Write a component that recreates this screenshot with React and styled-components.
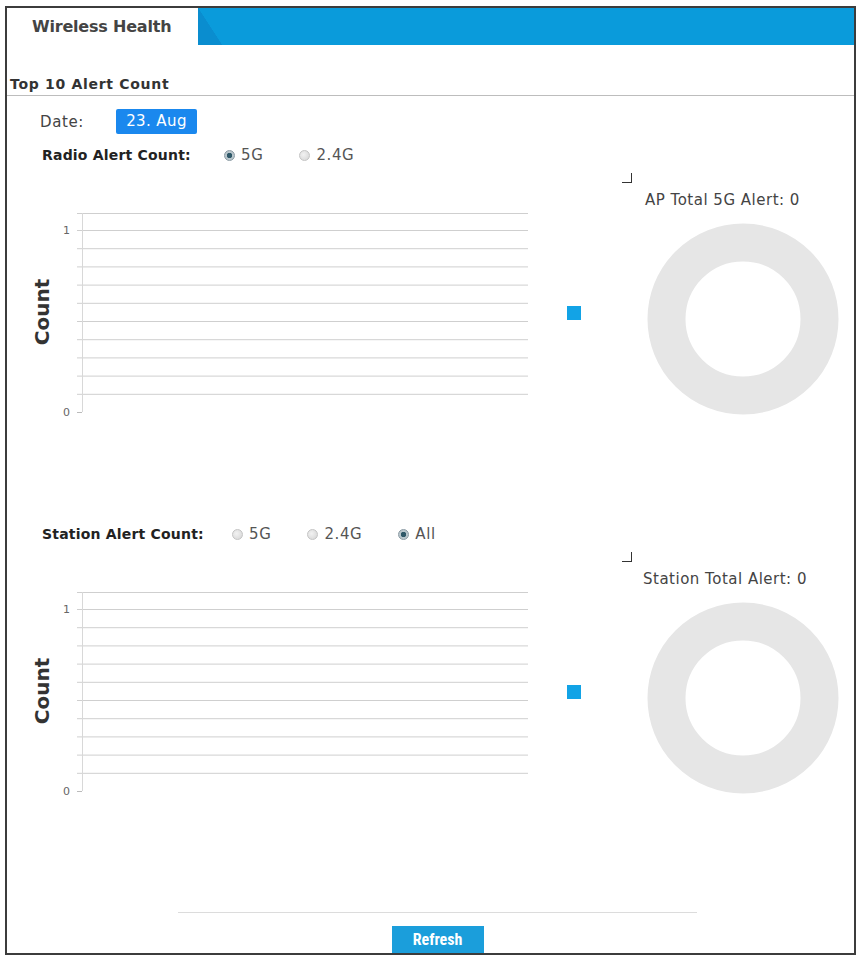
import styled, { createGlobalStyle } from 'styled-components';

const GlobalStyle = createGlobalStyle`
  html, body {
    margin: 0;
    padding: 0;
    background: #fff;
  }
  body {
    font-family: 'DejaVu Sans', 'Noto Sans', sans-serif;
    color: #333;
  }
`;

const Frame = styled.div`
  box-sizing: border-box;
  width: 851px;
  height: 949px;
  margin: 6px 0 0 5px;
  border: 2px solid #3c3c3c;
  display: flex;
  flex-direction: column;
`;

const Header = styled.div`
  display: flex;
  height: 37px;
`;

const Tab = styled.div`
  width: 191px;
  padding-left: 25px;
  box-sizing: border-box;
  display: flex;
  align-items: center;
  font-size: 16px;
  font-weight: 600;
  color: #444;
  letter-spacing: -0.2px;
`;

const Bar = styled.div`
  flex: 1;
  position: relative;
  background: #0a9bdb;

  &::before {
    content: '';
    position: absolute;
    left: 0;
    top: 0;
    width: 24px;
    height: 100%;
    background: linear-gradient(to top right, #0a8dcf 50%, transparent 51%);
  }
`;

const SectionTitle = styled.div`
  margin-top: 30px;
  padding: 0 0 2px 3px;
  height: 18px;
  line-height: 18px;
  font-size: 14px;
  font-weight: 600;
  letter-spacing: 0.7px;
  color: #333;
  border-bottom: 1px solid #bdbdbd;
`;

const DateRow = styled.div`
  display: flex;
  align-items: center;
  margin-top: 13px;
  padding-left: 33px;
  height: 25px;
`;

const DateLabel = styled.span`
  width: 76px;
  font-size: 15px;
  letter-spacing: 0.6px;
  color: #444;
`;

const DateBadge = styled.span`
  width: 81px;
  height: 25px;
  line-height: 25px;
  text-align: center;
  background: #1a88ee;
  border-radius: 2px;
  color: #fff;
  font-size: 15px;
  letter-spacing: 0.4px;
`;

const ControlRow = styled.div`
  display: flex;
  align-items: center;
  height: 20px;
  margin-top: ${(p) => p.$top}px;
  padding-left: 35px;
`;

const ControlLabel = styled.span`
  width: ${(p) => p.$width}px;
  font-size: 14px;
  font-weight: 700;
  letter-spacing: 0.2px;
  color: #222;
`;

const RadioOption = styled.label`
  display: flex;
  align-items: center;
  gap: 6px;
  margin-right: 36px;
  font-size: 15px;
  letter-spacing: 0.6px;
  color: #555;
`;

const RadioDot = styled.span`
  box-sizing: border-box;
  width: 11px;
  height: 11px;
  border-radius: 50%;
  border: 1px solid ${(p) => (p.$checked ? '#8a9aa3' : '#c4c4c4')};
  background: ${(p) =>
    p.$checked
      ? 'radial-gradient(circle, #2f5868 0 2.5px, #b9c6cc 3px)'
      : 'radial-gradient(circle at 40% 40%, #f2f2f2, #d4d4d4)'};
`;

const ChartRow = styled.div`
  display: grid;
  grid-template-columns: 535px 60px 1fr;
  height: 359px;
`;

const Legend = styled.div`
  padding: 141px 0 0 25px;
`;

const LegendSwatch = styled.span`
  display: block;
  width: 14px;
  height: 14px;
  background: #12a3e6;
`;

const DonutPanel = styled.div`
  display: flex;
  flex-direction: column;
  align-items: flex-start;
`;

const CornerMark = styled.span`
  width: 9px;
  height: 9px;
  margin: 8px 0 0 20px;
  border-right: 1.5px solid #333;
  border-bottom: 1.5px solid #333;
`;

const DonutTitle = styled.div`
  margin: 8px 0 0 ${(p) => p.$left}px;
  height: 18px;
  line-height: 18px;
  font-size: 15px;
  letter-spacing: 0.5px;
  color: #444;
`;

const DonutWrap = styled.div`
  margin: 14px 0 0 45px;
`;

const Footer = styled.div`
  display: flex;
  flex-direction: column;
  align-items: center;
  padding-left: 14px;
`;

const Separator = styled.div`
  width: 519px;
  margin-top: 9px;
  border-top: 1px solid #dcdcdc;
`;

const RefreshButton = styled.button`
  margin-top: 13px;
  width: 92px;
  height: 27px;
  border: none;
  background: #1b9edb;
  color: #fff;
  font-family: 'Liberation Sans Narrow', 'Roboto Condensed', Roboto, sans-serif;
  font-size: 16px;
  font-weight: 700;
  cursor: pointer;
`;

const gridTop = 65;
const gridBottom = 247;
const step = (gridBottom - gridTop) / 10;
const gridLines = [48, ...Array.from({ length: 10 }, (_, i) => gridTop + i * step)];

function CountChart() {
  return (
    <svg width="535" height="359">
      <text
        x="35"
        y="147"
        transform="rotate(-90 35 147)"
        textAnchor="middle"
        dominantBaseline="central"
        fontFamily="DejaVu Sans, sans-serif"
        fontWeight="700"
        fontSize="20"
        fill="#333"
      >
        Count
      </text>
      {gridLines.map((y) => (
        <line key={y} x1="70" x2="521" y1={y + 0.5} y2={y + 0.5} stroke="#cfcfcf" />
      ))}
      <line x1="75.5" x2="75.5" y1="48" y2="247" stroke="#d8d8d8" />
      <line x1="70" x2="75" y1="247.5" y2="247.5" stroke="#bbb" />
      <text x="63" y="65" textAnchor="end" dominantBaseline="central" fontSize="11" fill="#666" fontFamily="DejaVu Sans, sans-serif">
        1
      </text>
      <text x="63" y="247" textAnchor="end" dominantBaseline="central" fontSize="11" fill="#666" fontFamily="DejaVu Sans, sans-serif">
        0
      </text>
    </svg>
  );
}

function Donut() {
  return (
    <svg width="192" height="192" viewBox="0 0 192 192">
      <circle cx="96" cy="96" r="76.5" fill="none" stroke="#e6e6e6" strokeWidth="38" />
    </svg>
  );
}

function AlertSection({ label, labelWidth, options, title, titleLeft, top }) {
  return (
    <>
      <ControlRow $top={top}>
        <ControlLabel $width={labelWidth}>{label}</ControlLabel>
        {options.map((o) => (
          <RadioOption key={o.name}>
            <RadioDot $checked={o.checked} />
            {o.name}
          </RadioOption>
        ))}
      </ControlRow>
      <ChartRow>
        <CountChart />
        <Legend>
          <LegendSwatch />
        </Legend>
        <DonutPanel>
          <CornerMark />
          <DonutTitle $left={titleLeft}>{title}</DonutTitle>
          <DonutWrap>
            <Donut />
          </DonutWrap>
        </DonutPanel>
      </ChartRow>
    </>
  );
}

export default function App() {
  return (
    <>
      <GlobalStyle />
      <Frame>
        <Header>
          <Tab>Wireless Health</Tab>
          <Bar />
        </Header>
        <SectionTitle>Top 10 Alert Count</SectionTitle>
        <DateRow>
          <DateLabel>Date:</DateLabel>
          <DateBadge>23. Aug</DateBadge>
        </DateRow>
        <AlertSection
          top={11}
          label="Radio Alert Count:"
          labelWidth={182}
          options={[
            { name: '5G', checked: true },
            { name: '2.4G', checked: false },
          ]}
          title="AP Total 5G Alert: 0"
          titleLeft={43}
        />
        <AlertSection
          top={0}
          label="Station Alert Count:"
          labelWidth={190}
          options={[
            { name: '5G', checked: false },
            { name: '2.4G', checked: false },
            { name: 'All', checked: true },
          ]}
          title="Station Total Alert: 0"
          titleLeft={41}
        />
        <Footer>
          <Separator />
          <RefreshButton>Refresh</RefreshButton>
        </Footer>
      </Frame>
    </>
  );
}
